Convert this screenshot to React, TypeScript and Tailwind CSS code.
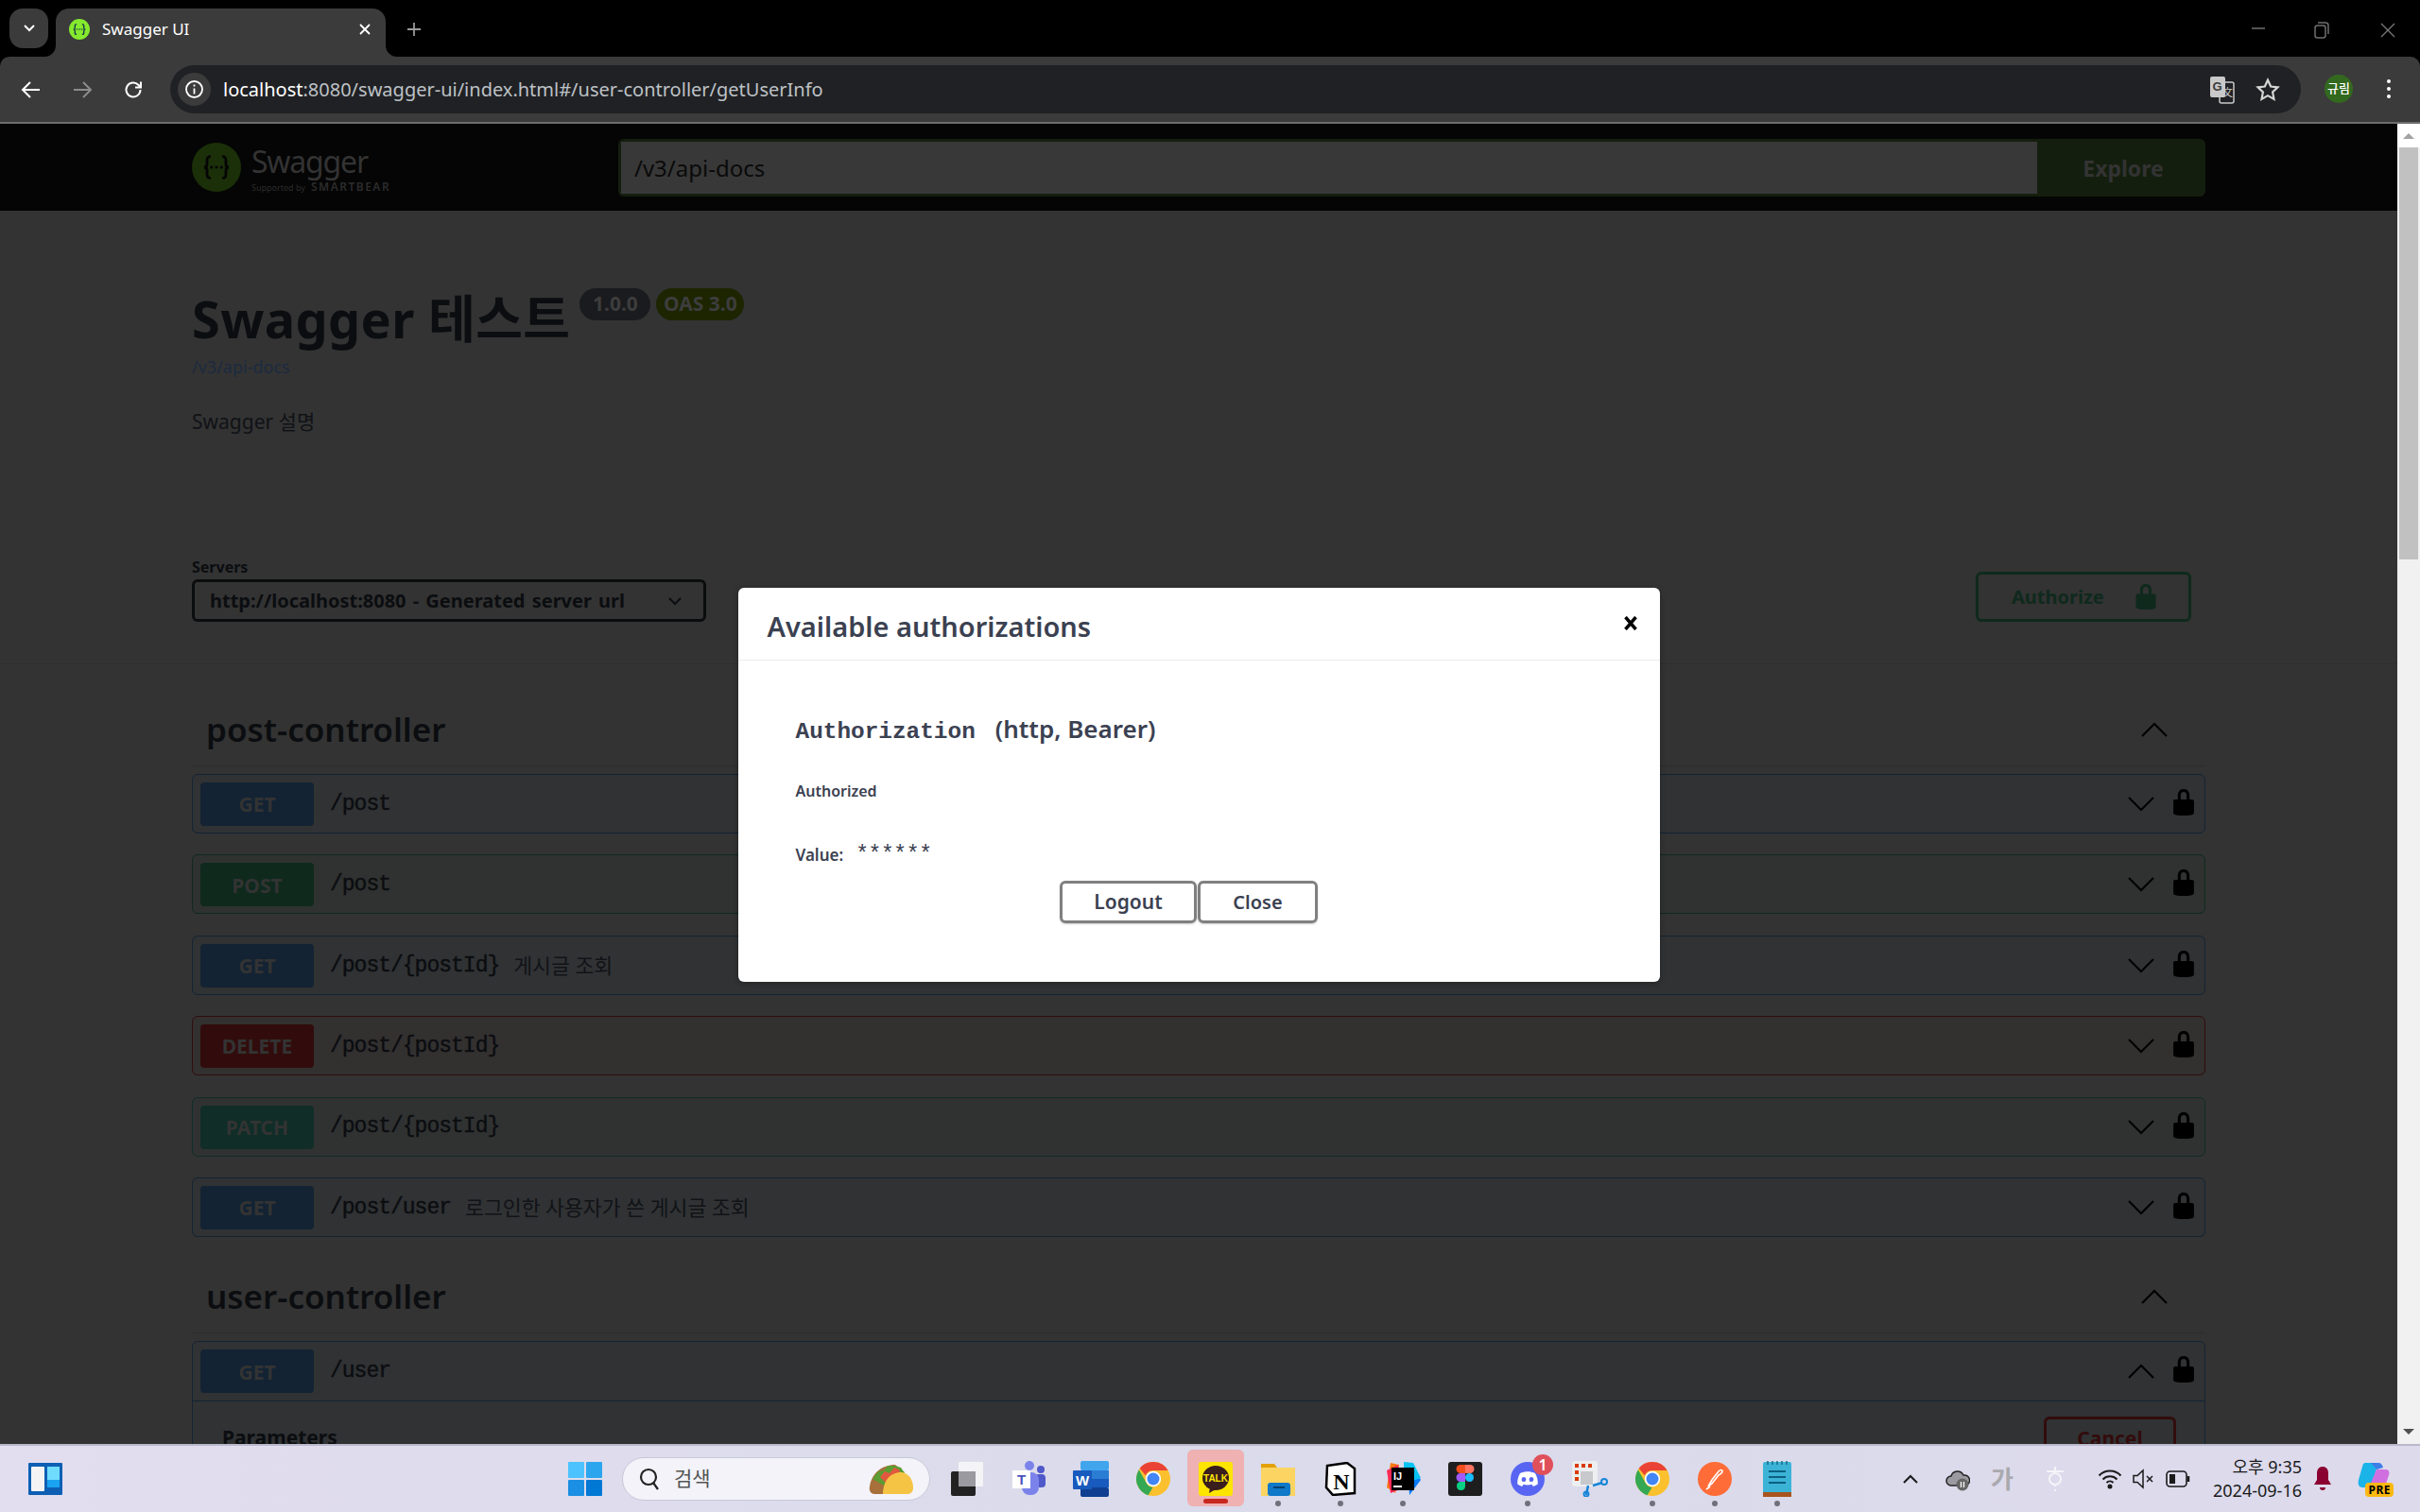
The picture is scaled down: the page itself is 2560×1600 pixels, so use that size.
import React from "react";

const sans = "font-['Noto_Sans','Noto_Sans_CJK_KR',sans-serif]";
const mono = "font-['Liberation_Mono','Noto_Sans_CJK_KR',monospace]";

const LOCK =
  "M15.8 8H14V5.6C14 2.703 12.665 1 10 1 7.334 1 6 2.703 6 5.6V8H4c-.553 0-1 .646-1 1.199V17c0 .549.428 1.139.951 1.307l1.197.387C5.672 18.861 6.55 19 7.1 19h5.8c.549 0 1.428-.139 1.951-.307l1.196-.387c.524-.167.953-.757.953-1.306V9.199C17 8.646 16.352 8 15.8 8zM12 8H8V5.199C8 3.754 8.797 3 10 3s2 .754 2 2.199V8z";

function Lock({ className }: { className: string }) {
  return (
    <svg viewBox="3 1 14 18" className={className} fill="currentColor">
      <path d={LOCK} />
    </svg>
  );
}

function Chevron({ up }: { up?: boolean }) {
  return (
    <svg width="28" height="16" viewBox="0 0 28 16" fill="none" stroke="#000" strokeWidth="2">
      <polyline points={up ? "1,15 14,2 27,15" : "1,1 14,14 27,1"} />
    </svg>
  );
}

function Braces({ color, size }: { color: string; size: number }) {
  return (
    <svg width={size} height={size} viewBox="0 0 24 24" fill="none" stroke={color} strokeWidth="1.6">
      <path d="M8.5 5.5c-2 0-2.2 1-2.2 2.4v2.2c0 1-.6 1.9-1.8 1.9 1.2 0 1.8.9 1.8 1.9v2.2c0 1.4.2 2.4 2.2 2.4" />
      <path d="M15.5 5.5c2 0 2.2 1 2.2 2.4v2.2c0 1 .6 1.9 1.8 1.9-1.2 0-1.8.9-1.8 1.9v2.2c0 1.4-.2 2.4-2.2 2.4" />
      <path d="M9 12h.01M12 12h.01M15 12h.01" strokeLinecap="round" strokeWidth="1.8" />
    </svg>
  );
}

const styles = {
  GET: { row: "bg-[#303234] border-[#132333]", badge: "bg-[#132333]" },
  POST: { row: "bg-[#2f3230] border-[#0f291d]", badge: "bg-[#0f291d]" },
  DELETE: { row: "bg-[#333030] border-[#320c0c]", badge: "bg-[#320c0c]" },
  PATCH: { row: "bg-[#303232] border-[#102d27]", badge: "bg-[#102d27]" },
};

function Summary({ method, path, desc, open }: { method: keyof typeof styles; path: string; desc?: string; open?: boolean }) {
  return (
    <div className="flex h-[62px] items-center pl-2 pr-[11px]">
      <div className={`flex h-[46px] w-[120px] items-center justify-center rounded-[4px] pt-[2px] text-[21px] font-bold text-[#333] ${styles[method].badge}`}>
        {method}
      </div>
      <span className={`ml-[17px] text-[23px] tracking-[-1px] text-[#0b0d10] [-webkit-text-stroke:0.4px_#0b0d10] ${mono}`}>{path}</span>
      {desc && <span className="ml-[15px] text-[21.6px] text-[#111317]">{desc}</span>}
      <div className="ml-auto mr-[20px] flex items-center">
        <Chevron up={open} />
      </div>
      <Lock className="-mt-[4px] h-[28px] w-[22px] text-black" />
    </div>
  );
}

function Row(props: { method: keyof typeof styles; path: string; desc?: string }) {
  return (
    <div className={`mb-[22.4px] h-[63px] rounded-[6px] border ${styles[props.method].row}`}>
      <Summary {...props} />
    </div>
  );
}

function TagHeader({ name }: { name: string }) {
  return (
    <div className="flex h-[62px] items-center justify-between border-b border-[#2b2c2e] pb-[16px] pl-[15px] pr-[40px]">
      <h3 className="text-[35px] font-semibold leading-none text-[#0b0d10]">{name}</h3>
      <Chevron up />
    </div>
  );
}

function ChromeLogo() {
  return (
    <svg width="36" height="36" viewBox="0 0 36 36">
      <circle cx="18" cy="18" r="18" fill="#fbc02d" />
      <path d="M18 0a18 18 0 0 1 15.6 9H18a9 9 0 0 0-8.2 5.2L3.6 6.8A18 18 0 0 1 18 0z" fill="#ea4335" />
      <path d="M2.9 8.2 10.5 22a9 9 0 0 0 7 5L12.6 35.2A18 18 0 0 1 2.9 8.2z" fill="#34a853" />
      <circle cx="18" cy="18" r="8.2" fill="#fff" />
      <circle cx="18" cy="18" r="6.5" fill="#4285f4" />
    </svg>
  );
}

// taskbar apps, left to right
const apps: { key: string; dot?: boolean; icon: React.ReactNode }[] = [
  {
    key: "files",
    icon: (
      <svg width="36" height="36" viewBox="0 0 36 36">
        <rect x="2" y="10" width="26" height="26" rx="2" fill="#222" />
        <rect x="10" y="0" width="26" height="26" rx="1" fill="#f4f4f6" />
        <rect x="10" y="10" width="18" height="16" fill="#9a9aa0" />
      </svg>
    ),
  },
  {
    key: "teams",
    icon: (
      <svg width="38" height="38" viewBox="0 0 38 38">
        <circle cx="20" cy="5" r="5" fill="#7b83eb" />
        <circle cx="32" cy="9" r="4" fill="#5059c9" />
        <rect x="26" y="14" width="11" height="14" rx="4" fill="#5059c9" />
        <rect x="12" y="12" width="18" height="24" rx="8" fill="#7b83eb" />
        <rect x="2" y="10" width="19" height="19" fill="#fff" />
        <text x="11.5" y="25" textAnchor="middle" fontSize="15" fontWeight="700" fill="#4b53bc" fontFamily="Liberation Sans">T</text>
      </svg>
    ),
  },
  {
    key: "word",
    icon: (
      <svg width="38" height="38" viewBox="0 0 38 38">
        <rect x="8" y="0" width="30" height="10" rx="2" fill="#41a5ee" />
        <rect x="8" y="10" width="30" height="9" fill="#2b7cd3" />
        <rect x="8" y="19" width="30" height="9" fill="#185abd" />
        <rect x="8" y="28" width="30" height="10" rx="2" fill="#103f91" />
        <rect x="0" y="10" width="20" height="20" rx="1" fill="#185abd" />
        <text x="10" y="25.5" textAnchor="middle" fontSize="15" fontWeight="700" fill="#fff" fontFamily="Liberation Sans">W</text>
      </svg>
    ),
  },
  { key: "chrome", icon: <ChromeLogo /> },
  {
    key: "kakao",
    icon: (
      <svg width="36" height="36" viewBox="0 0 36 36">
        <rect width="36" height="36" rx="3" fill="#fee500" />
        <ellipse cx="18" cy="17" rx="14" ry="13" fill="#3a1d1d" />
        <path d="M12 27l-1 6 7-4z" fill="#3a1d1d" />
        <text x="18" y="21" textAnchor="middle" fontSize="10" fontWeight="700" fill="#fee500" fontFamily="Liberation Sans">TALK</text>
      </svg>
    ),
  },
  {
    key: "explorer",
    dot: true,
    icon: (
      <svg width="36" height="36" viewBox="0 0 36 36">
        <path d="M0 2h14l3 4h19v30H0z" fill="#e3a008" />
        <rect y="6" width="36" height="30" rx="1" fill="#fcd462" />
        <rect x="7" y="22" width="24" height="14" rx="3" fill="#0f78c8" />
        <rect x="13" y="26" width="12" height="2" fill="#083f6e" />
      </svg>
    ),
  },
  {
    key: "notion",
    dot: true,
    icon: (
      <svg width="34" height="36" viewBox="0 0 34 36">
        <path d="M3 4 24 1l8 6v26L9 35l-7-8z" fill="#fff" stroke="#000" strokeWidth="2.5" />
        <text x="18" y="29" textAnchor="middle" fontSize="24" fontWeight="700" fill="#000" fontFamily="Liberation Serif">N</text>
      </svg>
    ),
  },
  {
    key: "idea",
    dot: true,
    icon: (
      <svg width="38" height="38" viewBox="0 0 38 38">
        <path d="M6 2l9 2-4 30-9-6z" fill="#f97a12" />
        <path d="M2 10l12-6 2 26-10 4z" fill="#fe2857" />
        <path d="M24 2l14 18-12 16z" fill="#087cfa" />
        <path d="M20 1l10 1 8 16-18 6z" fill="#07c3f2" />
        <rect x="7" y="7" width="24" height="24" fill="#000" />
        <text x="9" y="20" fontSize="11" fontWeight="700" fill="#fff" fontFamily="Liberation Sans">IJ</text>
        <rect x="9" y="26" width="9" height="2" fill="#fff" />
      </svg>
    ),
  },
  {
    key: "figma",
    icon: (
      <svg width="36" height="36" viewBox="0 0 36 36">
        <rect width="36" height="36" rx="3" fill="#1e1e1e" />
        <path d="M13 3h5v9h-5a4.5 4.5 0 0 1 0-9z" fill="#f24e1e" />
        <path d="M18 3h5a4.5 4.5 0 0 1 0 9h-5z" fill="#ff7262" />
        <path d="M13 12h5v9h-5a4.5 4.5 0 0 1 0-9z" fill="#a259ff" />
        <circle cx="22.5" cy="16.5" r="4.5" fill="#1abcfe" />
        <path d="M13 21h5v4.500a4.500 4.500 0 1 1-5-4.500z" fill="#0acf83" />
      </svg>
    ),
  },
  {
    key: "discord",
    dot: true,
    icon: (
      <div className="relative">
        <svg width="36" height="36" viewBox="0 0 36 36">
          <circle cx="18" cy="18" r="18" fill="#5865f2" />
          <path d="M10 12c5-2.500 11-2.500 16 0 2 3.500 3 7.500 2.800 11.500-1.800 1.300-3.500 2-5 2.500l-1.300-2.200c-3 .8-6 .8-9 0L12.200 26c-1.500-.5-3.200-1.200-5-2.500C7 19.500 8 15.500 10 12z" fill="#fff" />
          <ellipse cx="14" cy="18.500" rx="2.300" ry="2.600" fill="#5865f2" />
          <ellipse cx="22" cy="18.500" rx="2.300" ry="2.600" fill="#5865f2" />
        </svg>
        <span className="absolute -right-[9px] -top-[8px] flex h-[22px] w-[22px] items-center justify-center rounded-full bg-[#e0505a] text-[16px] font-semibold text-white">1</span>
      </div>
    ),
  },
  {
    key: "snip",
    icon: (
      <svg width="38" height="38" viewBox="0 0 38 38">
        <rect x="0" y="0" width="27" height="27" rx="3" fill="#eceef0" />
        <path d="M3 3h4v4H3zM10 3h4v4h-4zM17 3h4v4h-4zM3 10h4v4H3zM3 17h4v4H3z" fill="#d83b01" />
        <rect x="9" y="11" width="13" height="14" fill="#c7c9cc" />
        <path d="M17 26l-2 10M22 26l10-3" stroke="#1685d8" strokeWidth="2.500" fill="none" />
        <circle cx="34" cy="22" r="3" fill="none" stroke="#1685d8" strokeWidth="2" />
        <circle cx="15" cy="35" r="2.500" fill="none" stroke="#1685d8" strokeWidth="2" />
      </svg>
    ),
  },
  { key: "chrome2", dot: true, icon: <ChromeLogo /> },
  {
    key: "postman",
    dot: true,
    icon: (
      <svg width="36" height="36" viewBox="0 0 36 36">
        <circle cx="18" cy="18" r="18" fill="#ff6c37" />
        <path d="M11 26l4-7 7-9c2-2 4-2 4 0s-2 3-4 4l-7 9z" fill="none" stroke="#fff" strokeWidth="1.600" />
        <path d="M9 29l4-3" stroke="#fff" strokeWidth="1.600" />
      </svg>
    ),
  },
  {
    key: "notepad",
    dot: true,
    icon: (
      <svg width="30" height="38" viewBox="0 0 30 38">
        <rect y="1" width="30" height="34" rx="2" fill="#3bb3d6" />
        <rect y="33" width="30" height="5" fill="#a9541e" />
        <path d="M5 0v4M10 0v4M15 0v4M20 0v4M25 0v4" stroke="#1a6d8c" strokeWidth="1.500" />
        <path d="M6 11h18M6 17h18M6 23h18" stroke="#0b5f80" strokeWidth="2" />
      </svg>
    ),
  },
];

export default function App() {
  return (
    <div className={`flex h-screen w-full flex-col overflow-hidden bg-black ${sans}`}>
      {/* tab strip */}
      <div className="flex h-[60px] shrink-0 items-start bg-black pl-[10px] pt-[9px]">
        <div className="flex h-[42px] w-[41px] items-center justify-center rounded-[14px] bg-[#3b3b3b]">
          <svg width="14" height="10" viewBox="0 0 14 10" fill="none" stroke="#fff" strokeWidth="2"><polyline points="2,2 7,7 12,2" /></svg>
        </div>
        <div className="relative ml-[8px] flex h-[51px] w-[349px] items-center rounded-t-[14px] bg-[#3b3b3b] pb-[8px] pl-[14px] pr-[16px]">
          <svg className="absolute -left-[12px] bottom-0" width="12" height="12" viewBox="0 0 12 12" fill="#3b3b3b"><path d="M12 0v12H0a12 12 0 0 0 12-12z" /></svg>
          <svg className="absolute -right-[12px] bottom-0" width="12" height="12" viewBox="0 0 12 12" fill="#3b3b3b"><path d="M0 0v12h12A12 12 0 0 1 0 0z" /></svg>
          <div className="flex h-[22px] w-[22px] items-center justify-center rounded-full bg-[#85ea2d]">
            <Braces color="#173647" size={20} />
          </div>
          <span className="ml-[13px] text-[17px] text-white">Swagger UI</span>
          <svg className="ml-auto" width="12" height="12" viewBox="0 0 12 12" stroke="#fff" strokeWidth="1.800"><path d="M1 1l10 10M11 1L1 11" /></svg>
        </div>
        <svg className="ml-[22px] mt-[14px]" width="16" height="16" viewBox="0 0 16 16" stroke="#9a9a9a" strokeWidth="1.800"><path d="M8 1v14M1 8h14" /></svg>
        <div className="ml-auto flex items-center">
          <svg width="24" height="24" viewBox="0 0 24 24" stroke="#6f6f6f" strokeWidth="1.500" className="mr-[47px] mt-[9px]"><path d="M5 12h14" /></svg>
          <svg width="16" height="18" viewBox="0 0 16 18" fill="none" stroke="#6f6f6f" strokeWidth="1.500" className="mr-[54px] mt-[13px]">
            <rect x="1" y="4" width="11" height="13" rx="2.500" />
            <path d="M4 1h8a3 3 0 0 1 3 3v9" />
          </svg>
          <svg width="16" height="16" viewBox="0 0 16 16" stroke="#7a7a7a" strokeWidth="1.300" className="mr-[26px] mt-[13px]"><path d="M1 1l14 14M15 1L1 15" /></svg>
        </div>
      </div>

      {/* toolbar */}
      <div className="flex h-[71px] shrink-0 items-start rounded-t-[10px] border-b-2 border-[#6d6d6d] bg-[#3b3b3b] pt-[9px]">
        <svg className="ml-[22px] mt-[15px]" width="22" height="22" viewBox="0 0 22 22" fill="none" stroke="#fff" strokeWidth="2"><path d="M20 11H3M10 3l-8 8 8 8" /></svg>
        <svg className="ml-[32px] mt-[15px]" width="22" height="22" viewBox="0 0 22 22" fill="none" stroke="#8c8c8c" strokeWidth="2"><path d="M2 11h17M12 3l8 8-8 8" /></svg>
        <svg className="ml-[32px] mt-[15px]" width="22" height="22" viewBox="0 0 22 22" fill="none" stroke="#fff" strokeWidth="2"><path d="M18.500 11a7.500 7.500 0 1 1-2.200-5.300L19 8.500" /><path d="M19 2.500v6h-6" /></svg>
        <div className="ml-[28px] flex h-[51px] w-[2254px] items-center rounded-full bg-[#202124] pl-[8px] pr-[22px]">
          <div className="flex h-[35px] w-[35px] items-center justify-center rounded-full bg-[#3b3b3b]">
            <svg width="21" height="21" viewBox="0 0 21 21" fill="none" stroke="#fff" strokeWidth="1.800"><circle cx="10.500" cy="10.500" r="8.500" /><path d="M10.500 9.500v6M10.500 5.500v2" /></svg>
          </div>
          <div className="ml-[13px] flex text-[20px] text-[#bdc1c6]">
            <span className="text-white">localhost</span>
            <span>:8080/swagger-ui/index.html#/user-controller/getUserInfo</span>
          </div>
          <svg className="ml-auto" width="26" height="30" viewBox="0 0 26 30">
            <rect x="0" y="1" width="16" height="22" rx="2" fill="#c9c9c9" />
            <rect x="10" y="7" width="15" height="22" rx="2" fill="none" stroke="#c9c9c9" strokeWidth="1.500" />
            <text x="2.500" y="16" fontSize="13" fontWeight="700" fill="#3b3b3b" fontFamily="Liberation Sans">G</text>
            <text x="13" y="22" fontSize="11" fill="#c9c9c9" fontFamily="Noto Sans CJK JP">文</text>
          </svg>
          <svg className="ml-[22px]" width="26" height="26" viewBox="0 0 24 24" fill="none" stroke="#d6d6d6" strokeWidth="2"><path d="M12 2.500l2.900 6.300 6.800.8-5 4.700 1.300 6.800-6-3.400-6 3.400 1.300-6.800-5-4.700 6.800-.8z" /></svg>
        </div>
        <div className="ml-[25px] mt-[10px] flex h-[30px] w-[30px] items-center justify-center rounded-full bg-[#33691e] text-[13px] font-medium text-white">규림</div>
        <div className="ml-[36px] mt-[15px] flex h-[20px] w-[4px] flex-col justify-between">
          <span className="h-[4px] w-[4px] rounded-full bg-white" />
          <span className="h-[4px] w-[4px] rounded-full bg-white" />
          <span className="h-[4px] w-[4px] rounded-full bg-white" />
        </div>
      </div>

      {/* page + scrollbar */}
      <div className="flex min-h-0 flex-1">
        <div className="relative min-w-0 flex-1 overflow-hidden bg-[#333]">
          {/* swagger top bar */}
          <div className="flex h-[92px] items-center bg-[#050505] px-[203px]">
            <div className="flex w-[451px] items-center">
              <div className="flex h-[52px] w-[52px] items-center justify-center rounded-full bg-[#1b2f09]">
                <Braces color="#050505" size={42} />
              </div>
              <div className="ml-[11px] flex flex-col pt-[4px]">
                <span className="text-[32px] leading-[36px] tracking-[-1.2px] text-[#333]">Swagger</span>
                <span className="mt-[3px] flex items-baseline text-[9px] leading-[12px] text-[#2c2c2c]">
                  <span>Supported by</span>
                  <span className="ml-[6px] text-[12px] font-semibold tracking-[1.5px]">SMARTBEAR</span>
                </span>
              </div>
            </div>
            <div className="flex h-[61px] flex-1 overflow-hidden rounded-[6px] bg-[#141e0e]">
              <div className="m-[3px] mr-0 flex flex-1 items-center bg-[#383838] pl-[14px] pt-[2px] text-[24px] text-[#0a0a0a]">/v3/api-docs</div>
              <div className="flex w-[178px] items-center justify-center pl-[4px] pt-[2px] text-[23px] font-bold text-[#333]">Explore</div>
            </div>
          </div>

          {/* info */}
          <div className="h-[312px] px-[203px] pt-[78px]">
            <div className="flex items-start">
              <h2 className="text-[54px] font-bold leading-[72px] tracking-[0.4px] text-[#0b0d10]">Swagger 테스트</h2>
              <span className="ml-[10px] mt-[4px] flex h-[34px] w-[75px] items-center justify-center rounded-full bg-[#1a1b1e] text-[21px] font-bold text-[#3d3d3d]">1.0.0</span>
              <span className="ml-[6px] mt-[4px] flex h-[34px] w-[93px] items-center justify-center rounded-full bg-[#1c2500] text-[21px] font-bold text-[#3d3d3d]">OAS 3.0</span>
            </div>
            <div className="mt-[3px] text-[18px] leading-[24px] text-[#1c2a40]">/v3/api-docs</div>
            <div className="mt-[32px] text-[21px] leading-[28px] text-[#101216]">Swagger 설명</div>
          </div>

          {/* servers + authorize */}
          <div className="flex h-[168px] items-end justify-between border-b border-[#2f2f2f] pb-[44px] pl-[203px] pr-[218px]">
            <div>
              <div className="mb-[3px] text-[16px] font-bold leading-[19px] text-[#0b0d10]">Servers</div>
              <div className="flex h-[45px] w-[544px] items-center justify-between rounded-[6px] border-[3px] border-[#0b0c0e] pl-[16px] pr-[22px] text-[20px] font-bold text-[#0b0d10] [word-spacing:2px]">
                http://localhost:8080 - Generated server url
                <svg width="16" height="10" viewBox="0 0 16 10" fill="none" stroke="#0b0d10" strokeWidth="2"><polyline points="2,2 8,8 14,2" /></svg>
              </div>
            </div>
            <div className="flex h-[53px] w-[228px] items-center rounded-[6px] border-[3px] border-[#0f291d] pl-[35px] text-[20px] font-bold text-[#0f291d]">
              Authorize
              <Lock className="ml-[33px] h-[27px] w-[22px] text-[#0f291d]" />
            </div>
          </div>

          {/* operations */}
          <div className="px-[203px] pt-[46px]">
            <TagHeader name="post-controller" />
            <div className="pt-[8px]">
              <Row method="GET" path="/post" />
              <Row method="POST" path="/post" />
              <Row method="GET" path="/post/{postId}" desc="게시글 조회" />
              <Row method="DELETE" path="/post/{postId}" />
              <Row method="PATCH" path="/post/{postId}" />
              <Row method="GET" path="/post/user" desc="로그인한 사용자가 쓴 게시글 조회" />
            </div>
            <div className="pt-[18px]">
              <TagHeader name="user-controller" />
            </div>
            <div className="mt-[8px] rounded-[6px] border border-[#132333] bg-[#303234]">
              <div className="border-b border-[#132333]">
                <Summary method="GET" path="/user" open />
              </div>
              <div className="flex items-start justify-between pl-[31px] pr-[30px] pt-[16px]">
                <span className="mt-[8px] text-[21px] font-bold leading-[28px] text-[#0b0d10]">Parameters</span>
                <span className="flex h-[53px] w-[140px] items-center justify-center rounded-[6px] border-[3px] border-[#320c0c] pb-[6px] text-[21px] font-bold text-[#320c0c]">Cancel</span>
              </div>
            </div>
          </div>

          {/* auth modal */}
          <div className="absolute inset-0 flex items-start justify-center pt-[491px]">
            <div className="h-[417px] w-[975px] rounded-[6px] bg-white shadow-[0_1px_6px_rgba(0,0,0,0.3)]">
              <div className="flex h-[77px] items-start justify-between border-b border-[#ebebeb] pl-[31px] pr-[24px]">
                <h3 className="mt-[21px] text-[29px] font-semibold leading-[40px] text-[#3b4151]">Available authorizations</h3>
                <svg className="mt-[30px]" width="14" height="15" viewBox="0 0 14 15" stroke="#000" strokeWidth="3.500"><path d="M1.500 1l11 13M12.500 1l-11 13" /></svg>
              </div>
              <div className="pl-[61px] pr-[60px] pt-[56px]">
                <div className="flex items-baseline text-[26px] font-semibold leading-[32px] text-[#3b4151]">
                  <span className={`text-[24.4px] font-bold ${mono}`}>Authorization</span>
                  <span className="ml-[21px]">(http, Bearer)</span>
                </div>
                <div className="mt-[35px] text-[16px] font-semibold leading-[22px] text-[#3b4151]">Authorized</div>
                <div className="mt-[41px] flex items-start text-[#3b4151]">
                  <span className="mt-[5px] text-[17px] font-semibold leading-[22px]">Value:</span>
                  <span className={`ml-[13px] mt-[5px] text-[23px] leading-[22px] tracking-[-0.4px] ${mono}`}>******</span>
                </div>
                <div className="mt-[16px] flex justify-center gap-[1px] pr-[22px]">
                  <span className="flex h-[45px] w-[145px] items-center justify-center rounded-[6px] border-[3px] border-[#808080] text-[21px] font-semibold text-[#3b4151] shadow-[0_1px_2px_rgba(0,0,0,0.2)]">Logout</span>
                  <span className="flex h-[45px] w-[127px] items-center justify-center rounded-[6px] border-[3px] border-[#808080] text-[20px] font-semibold text-[#3b4151] shadow-[0_1px_2px_rgba(0,0,0,0.2)]">Close</span>
                </div>
              </div>
            </div>
          </div>
        </div>

        {/* scrollbar */}
        <div className="flex w-[24px] shrink-0 flex-col items-center bg-[#f1f1f1]">
          <div className="flex h-[25px] w-full items-center justify-center bg-white">
            <div className="h-0 w-0 border-x-[6px] border-b-[6px] border-x-transparent border-b-[#a3a3a3]" />
          </div>
          <div className="h-[436px] w-[20px] bg-[#c1c1c1]" />
          <div className="mt-auto mb-[10px] h-0 w-0 border-x-[6px] border-t-[6px] border-x-transparent border-t-[#505050]" />
        </div>
      </div>

      {/* taskbar */}
      <div className="relative flex h-[72px] shrink-0 items-center border-t-2 border-[#b9b9cb] bg-gradient-to-r from-[#e2ddef] via-[#dadbeb] to-[#dddaec]">
        <svg className="ml-[30px]" width="36" height="34" viewBox="0 0 36 34">
          <rect width="36" height="34" rx="1" fill="#0d5fb3" />
          <rect x="3" y="4" width="14" height="26" rx="1" fill="#f4f4f4" />
          <rect x="20" y="4" width="13" height="14" fill="#6fdcff" />
          <rect x="20" y="18" width="13" height="8" fill="#1aa3f0" />
        </svg>
        <svg className="ml-[535px]" width="36" height="36" viewBox="0 0 36 36">
          <rect width="17" height="17" rx="1" fill="#4cc2ff" />
          <rect x="19" width="17" height="17" rx="1" fill="#2ba5ee" />
          <rect y="19" width="17" height="17" rx="1" fill="#1a8fe3" />
          <rect x="19" y="19" width="17" height="17" rx="1" fill="#0078d4" />
        </svg>
        <div className="ml-[21px] flex h-[46px] w-[326px] items-center rounded-full border border-[#c8c8d8] bg-[#f3f3f9] pl-[16px] pr-[16px]">
          <svg width="24" height="26" viewBox="0 0 24 26" fill="none" stroke="#222" strokeWidth="2.200"><circle cx="11" cy="11" r="8" /><path d="M16 17l5 7" /></svg>
          <span className="ml-[14px] text-[21px] text-[#555]">검색</span>
          <svg className="ml-auto" width="48" height="32" viewBox="0 0 48 32">
            <path d="M1 24C3 10 14 1 28 1l10 8-22 23H6C2 32 0 28 1 24z" fill="#a8703a" />
            <path d="M4 16l6-8 6-1 4-5 8 0 6 2 4 6-20 14z" fill="#5d9c32" />
            <path d="M12 14l5-6 5 2 5-6 5 2 2 6-14 10z" fill="#e2583e" />
            <path d="M15 32c0-14 8-23 19-23 8 0 13 8 13 16 0 4-2 7-6 7z" fill="#f6c445" />
          </svg>
        </div>
        <div className="absolute left-[989px] top-0 flex h-full">
          {apps.map((a) => (
            <div key={a.key} className="relative flex h-full w-[66px] items-center justify-center">
              {a.key === "kakao" && (
                <div className="absolute left-[3px] top-[4px] flex h-[60px] w-[60px] items-end justify-center rounded-[6px] bg-[#efb1b1] pb-[3px]">
                  <div className="h-[5px] w-[26px] rounded-full bg-[#c8281e]" />
                </div>
              )}
              <div className="relative flex h-[38px] items-center justify-center">{a.icon}</div>
              {a.dot && <div className="absolute bottom-[6px] h-[6px] w-[6px] rounded-full bg-[#70707a]" />}
            </div>
          ))}
        </div>
        <div className="ml-auto flex items-center pr-[30px] text-[#1a1a1a]">
          <svg width="16" height="10" viewBox="0 0 16 10" fill="none" stroke="#1a1a1a" strokeWidth="2"><polyline points="1,9 8,2 15,9" /></svg>
          <svg className="ml-[29px]" width="26" height="26" viewBox="0 0 26 26">
            <path d="M6 20a5 5 0 0 1 0-10 7 7 0 0 1 13-1 5.500 5.500 0 0 1 2 11z" fill="#9a9aa0" stroke="#222" strokeWidth="1.500" />
            <circle cx="18" cy="19" r="6.500" fill="#666" />
            <path d="M16.500 16v6M19.500 16v6" stroke="#fff" strokeWidth="1.300" />
          </svg>
          <span className="ml-[22px] text-[26px] font-bold leading-none text-[#a9a9ae]">가</span>
          {/* IME glyph drawn as tray icon */}
          <svg className="ml-[33px]" width="22" height="26" viewBox="0 0 22 26" fill="none" stroke="#f4f4f8" strokeWidth="2">
            <path d="M11 0v4M2 5h18" />
            <circle cx="11" cy="13" r="6" />
            <path d="M11 20v1M11 24v2" />
          </svg>
          <svg className="ml-[34px]" width="26" height="22" viewBox="0 0 26 22" fill="none" stroke="#1a1a1a" strokeWidth="2"><path d="M1.500 7.500a16 16 0 0 1 23 0M5.500 11.500a10.500 10.500 0 0 1 15 0M9.500 15a5 5 0 0 1 7 0" /><circle cx="13" cy="19" r="1.500" fill="#1a1a1a" /></svg>
          <svg className="ml-[11px]" width="24" height="22" viewBox="0 0 24 22" fill="none" stroke="#1a1a1a" strokeWidth="1.500"><path d="M1 7.500h4L11 2v18l-6-5.500H1zM15 8l6 6M21 8l-6 6" /></svg>
          <svg className="ml-[11px]" width="26" height="18" viewBox="0 0 26 18" fill="none" stroke="#1a1a1a" strokeWidth="1.600"><rect x="1" y="1" width="21" height="16" rx="3.500" /><rect x="4" y="4" width="6" height="10" fill="#1a1a1a" stroke="none" /><path d="M24 6v6" strokeWidth="2.500" /></svg>
          <div className="ml-[14px] flex w-[104px] flex-col items-end text-[18px] leading-[25px]">
            <span>오후 9:35</span>
            <span>2024-09-16</span>
          </div>
          <svg className="ml-[12px]" width="20" height="28" viewBox="0 0 20 28" fill="#8a0030"><path d="M10 1c-4 0-6 3-6 7v7l-3 5h18l-3-5V8c0-4-2-7-6-7z" /><path d="M7 23a3 3 0 0 0 6 0z" /></svg>
          <div className="relative ml-[27px] h-[38px] w-[36px]">
            <svg width="34" height="30" viewBox="0 0 34 30">
              <path d="M8 2h14l-8 26H5C1 28 0 24 1 20L5 6c.6-2.500 1.500-4 3-4z" fill="#1bb4e8" />
              <path d="M14 2h8c3 0 4 2 5 5l-7 2z" fill="#3d7ee8" />
              <path d="M20 9h10c3 0 4 3 3 6l-3 9c-1 3-3 4-6 4H12z" fill="#d06fe0" />
            </svg>
            <span className="absolute -right-[2px] bottom-0 rounded-[4px] bg-[#fdb913] px-[3px] text-[12px] font-bold leading-[15px] tracking-[0.5px] text-black">PRE</span>
          </div>
        </div>
      </div>
    </div>
  );
}
